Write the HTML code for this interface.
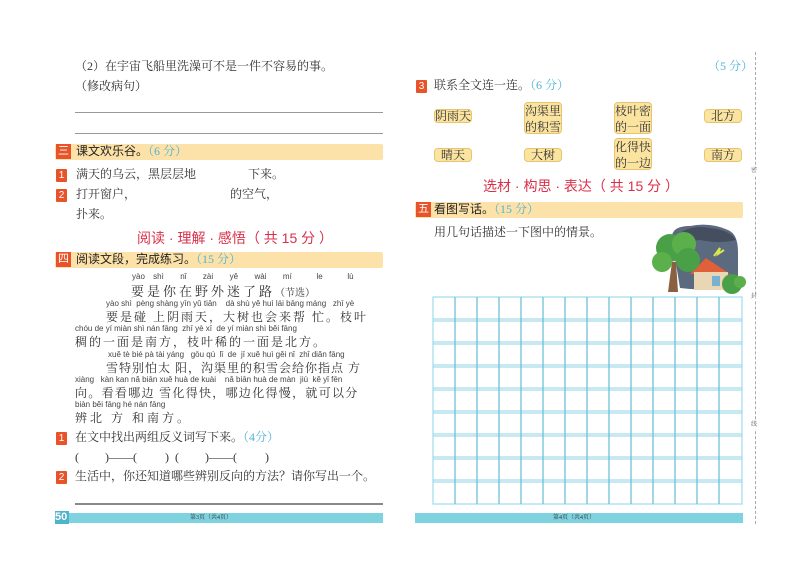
<!DOCTYPE html>
<html><head><meta charset="utf-8"><style>
*{margin:0;padding:0;box-sizing:border-box}
body{width:800px;height:566px;background:#fff;position:relative;overflow:hidden;font-family:"Liberation Serif","Noto Serif CJK SC","Noto Sans CJK SC",serif;color:#333}
.a{position:absolute;white-space:nowrap;line-height:1.15}
.t{font-size:12px}
.s{font-family:"Liberation Sans","Noto Sans CJK SC",sans-serif}
.bar{position:absolute;height:16px;background:#fce2a8;border-radius:2px}
.num{position:absolute;width:15px;height:15px;background:#e8532a;color:#fff;font-size:11px;text-align:center;line-height:15px;font-family:"Liberation Sans","Noto Sans CJK SC",sans-serif}
.sq{position:absolute;width:11px;height:13px;background:#e8532a;color:#fff;font-size:10px;text-align:center;line-height:13px;border-radius:1px;font-family:"Liberation Sans",sans-serif}
.blue{color:#4fb3d6}
.red{color:#d9304a;font-family:"Liberation Sans","Noto Sans CJK SC",sans-serif;font-size:14px}
.py{font-family:"Liberation Sans",sans-serif;font-size:8px;color:#444;line-height:10px}
.hz{font-size:12px;line-height:14px}
.line{position:absolute;height:1px;background:#999}
.box{position:absolute;background:#fbe3a0;border:1px solid #e7c56e;border-radius:4px;font-size:12px;text-align:center;line-height:16px}
</style></head><body>

<div class="a t" style="left:75px;top:60px">（2）在宇宙飞船里洗澡可不是一件不容易的事。</div>
<div class="a t" style="left:75px;top:80px">（修改病句）</div>
<div class="line" style="left:75px;top:112px;width:308px"></div>
<div class="line" style="left:75px;top:133px;width:308px"></div>

<div class="bar" style="left:55px;top:144px;width:328px"></div>
<div class="num" style="left:56px;top:144px">三</div>
<div class="a s" style="left:76px;top:145px;font-size:12px;color:#222">课文欢乐谷。<span class="blue" style="font-family:'Liberation Serif','Noto Serif CJK SC',serif">（6 分）</span></div>
<div class="sq" style="left:56px;top:169px">1</div>
<div class="a t" style="left:76px;top:168px">满天的乌云，黑层层地<span style="display:inline-block;width:52px"></span>下来。</div>
<div class="sq" style="left:56px;top:189px">2</div>
<div class="a t" style="left:76px;top:188px">打开窗户，<span style="display:inline-block;width:94px"></span>的空气，</div>
<div class="a t" style="left:76px;top:208px">扑来。</div>

<div class="a red" style="left:137px;top:230px">阅读 · 理解 · 感悟（ 共 15 分 ）</div>

<div class="bar" style="left:55px;top:252px;width:328px"></div>
<div class="num" style="left:56px;top:252px">四</div>
<div class="a s" style="left:76px;top:253px;font-size:12px;color:#222">阅读文段，完成练习。<span class="blue" style="font-family:'Liberation Serif','Noto Serif CJK SC',serif">（15 分）</span></div>

<div class="a py" style="left:132px;top:272px;word-spacing:6px">yào shì &nbsp;nǐ &nbsp;zài &nbsp;yě &nbsp;wài &nbsp;mí &nbsp;&nbsp;le &nbsp;&nbsp;lù</div>
<div class="a" style="left:131px;top:284px;font-size:13px;line-height:15px;letter-spacing:3px">要是你在野外迷了路<span style="font-size:10px;letter-spacing:0">（节选）</span></div>
<div class="a py" style="left:106px;top:299px">yào shì &nbsp;pèng shàng yīn yǔ tiān &nbsp;&nbsp;&nbsp;dà shù yě huì lái bāng máng &nbsp;&nbsp;zhī yè</div>
<div class="a hz" style="left:106px;top:310px;letter-spacing:2px">要是碰 上阴雨天，大树也会来帮 忙。枝叶</div>
<div class="a py" style="left:75px;top:324px">chóu de yí miàn shì nán fāng &nbsp;zhī yè xī &nbsp;de yí miàn shì běi fāng</div>
<div class="a hz" style="left:75px;top:335px;letter-spacing:2px">稠的一面是南方，枝叶稀的一面是北方。</div>
<div class="a py" style="left:108px;top:350px">xuě tè bié pà tài yáng &nbsp;&nbsp;gōu qú &nbsp;lǐ &nbsp;de &nbsp;jī xuě huì gěi nǐ &nbsp;zhǐ diǎn fāng</div>
<div class="a hz" style="left:106px;top:361px;letter-spacing:1px">雪特别怕太 阳，沟渠里的积雪会给你指点 方</div>
<div class="a py" style="left:75px;top:375px">xiàng &nbsp;&nbsp;kàn kan nǎ biān xuě huà de kuài &nbsp;&nbsp;&nbsp;nǎ biān huà de màn &nbsp;jiù &nbsp;kě yǐ fēn</div>
<div class="a hz" style="left:75px;top:386px;letter-spacing:1.3px">向。看看哪边 雪化得快，哪边化得慢，就可以分</div>
<div class="a py" style="left:75px;top:400px">biàn běi fāng hé nán fāng</div>
<div class="a hz" style="left:75px;top:411px;letter-spacing:3px">辨北 方 和南方。</div>

<div class="sq" style="left:56px;top:432px">1</div>
<div class="a t" style="left:75px;top:431px">在文中找出两组反义词写下来。<span class="blue">（4分）</span></div>
<div class="a t" style="left:75px;top:451px">(<span style="display:inline-block;width:26px"></span>)——(<span style="display:inline-block;width:28px"></span>) &nbsp;(<span style="display:inline-block;width:26px"></span>)——(<span style="display:inline-block;width:28px"></span>)</div>
<div class="sq" style="left:56px;top:471px">2</div>
<div class="a t" style="left:75px;top:470px">生活中，你还知道哪些辨别反向的方法？请你写出一个。</div>
<div class="line" style="left:75px;top:503px;width:308px;height:2px;background:#888"></div>

<div style="position:absolute;left:55px;top:513px;width:328px;height:10px;background:#7fd3e0"></div>
<div style="position:absolute;left:55px;top:511px;width:14px;height:13px;background:#4fb3c9;color:#fff;font:bold 11px/13px 'Liberation Sans',sans-serif">50</div>
<div class="a" style="left:190px;top:513px;font-size:6px;line-height:10px">第3页（共4页）</div>
<div style="position:absolute;left:415px;top:513px;width:328px;height:10px;background:#7fd3e0"></div>
<div class="a" style="left:553px;top:513px;font-size:6px;line-height:10px">第4页（共4页）</div>

<!-- right page -->
<div class="a t blue" style="left:708px;top:60px">（5 分）</div>
<div class="sq" style="left:416px;top:80px">3</div>
<div class="a t" style="left:434px;top:79px">联系全文连一连。<span class="blue">（6 分）</span></div>
<div class="box" style="left:434px;top:109px;width:38px;height:14px;line-height:12px">阴雨天</div>
<div class="box" style="left:524px;top:102px;width:38px;height:32px">沟渠里<br>的积雪</div>
<div class="box" style="left:614px;top:102px;width:38px;height:32px">枝叶密<br>的一面</div>
<div class="box" style="left:704px;top:109px;width:38px;height:14px;line-height:12px">北方</div>
<div class="box" style="left:434px;top:148px;width:38px;height:14px;line-height:12px">晴天</div>
<div class="box" style="left:524px;top:148px;width:38px;height:14px;line-height:12px">大树</div>
<div class="box" style="left:614px;top:138px;width:38px;height:32px">化得快<br>的一边</div>
<div class="box" style="left:704px;top:148px;width:38px;height:14px;line-height:12px">南方</div>

<div class="a red" style="left:483px;top:178px">选材 · 构思 · 表达（ 共 15 分 ）</div>

<div class="bar" style="left:415px;top:202px;width:328px"></div>
<div class="num" style="left:416px;top:202px">五</div>
<div class="a s" style="left:434px;top:203px;font-size:12px;color:#222">看图写话。<span class="blue" style="font-family:'Liberation Serif','Noto Serif CJK SC',serif">（15 分）</span></div>
<div class="a t" style="left:434px;top:226px">用几句话描述一下图中的情景。</div>

<svg class="a" style="left:650px;top:222px" width="96" height="74" viewBox="0 0 96 74">
<path d="M22 18 Q20 4 40 4 Q60 0 78 8 Q88 12 88 30 L88 62 Q60 70 30 66 Z" fill="#5c6a80"/>
<path d="M26 14 Q40 2 60 6 Q80 8 86 18 Q70 22 50 18 Q36 20 26 14Z" fill="#444e5e"/>
<path d="M64 34 L70 26 L68 32 L74 28" stroke="#d8e84a" stroke-width="2" fill="none"/>
<path d="M40 52 L56 36 L80 52 Z" fill="#e0603a"/>
<rect x="44" y="50" width="34" height="18" fill="#e8d6b4"/>
<rect x="62" y="54" width="8" height="10" fill="#7ab0d0"/>
<circle cx="20" cy="26" r="14" fill="#4aa046"/>
<circle cx="34" cy="22" r="12" fill="#5cb04c"/>
<circle cx="38" cy="38" r="12" fill="#4aa046"/>
<circle cx="12" cy="40" r="10" fill="#5cb04c"/>
<path d="M18 70 L22 40 L26 40 L28 70Z" fill="#8a6040"/>
<circle cx="82" cy="62" r="10" fill="#4aa046"/>
<circle cx="90" cy="60" r="6" fill="#5cb04c"/>
</svg>

<svg class="a" style="left:432px;top:296px" width="312" height="210" viewBox="0 0 312 210">
<g fill="none" stroke="#9edcec" stroke-width="1.2">
<rect x="1" y="1" width="309" height="207"/>
</g>
<g stroke="#8fd3e6" stroke-width="1">
<line x1="1" y1="23" x2="310" y2="23"/><line x1="1" y1="25" x2="310" y2="25"/>
<line x1="1" y1="46" x2="310" y2="46"/><line x1="1" y1="48" x2="310" y2="48"/>
<line x1="1" y1="69" x2="310" y2="69"/><line x1="1" y1="71" x2="310" y2="71"/>
<line x1="1" y1="92" x2="310" y2="92"/><line x1="1" y1="94" x2="310" y2="94"/>
<line x1="1" y1="115" x2="310" y2="115"/><line x1="1" y1="117" x2="310" y2="117"/>
<line x1="1" y1="138" x2="310" y2="138"/><line x1="1" y1="140" x2="310" y2="140"/>
<line x1="1" y1="161" x2="310" y2="161"/><line x1="1" y1="163" x2="310" y2="163"/>
<line x1="1" y1="184" x2="310" y2="184"/><line x1="1" y1="186" x2="310" y2="186"/>
</g>
<g stroke="#6fbfd8" stroke-width="1.3">
<line x1="23" y1="1" x2="23" y2="208"/><line x1="45" y1="1" x2="45" y2="208"/>
<line x1="67" y1="1" x2="67" y2="208"/><line x1="89" y1="1" x2="89" y2="208"/>
<line x1="111" y1="1" x2="111" y2="208"/><line x1="133" y1="1" x2="133" y2="208"/>
<line x1="155" y1="1" x2="155" y2="208"/><line x1="177" y1="1" x2="177" y2="208"/>
<line x1="199" y1="1" x2="199" y2="208"/><line x1="221" y1="1" x2="221" y2="208"/>
<line x1="243" y1="1" x2="243" y2="208"/><line x1="265" y1="1" x2="265" y2="208"/>
<line x1="287" y1="1" x2="287" y2="208"/>
</g>
</svg>

<div style="position:absolute;left:755px;top:52px;height:472px;border-left:1px dashed #aaa"></div>
<div class="a" style="left:751px;top:168px;font-size:6px;background:#fff;color:#666">密</div>
<div class="a" style="left:751px;top:294px;font-size:6px;background:#fff;color:#666">封</div>
<div class="a" style="left:751px;top:422px;font-size:6px;background:#fff;color:#666">线</div>
</body></html>
